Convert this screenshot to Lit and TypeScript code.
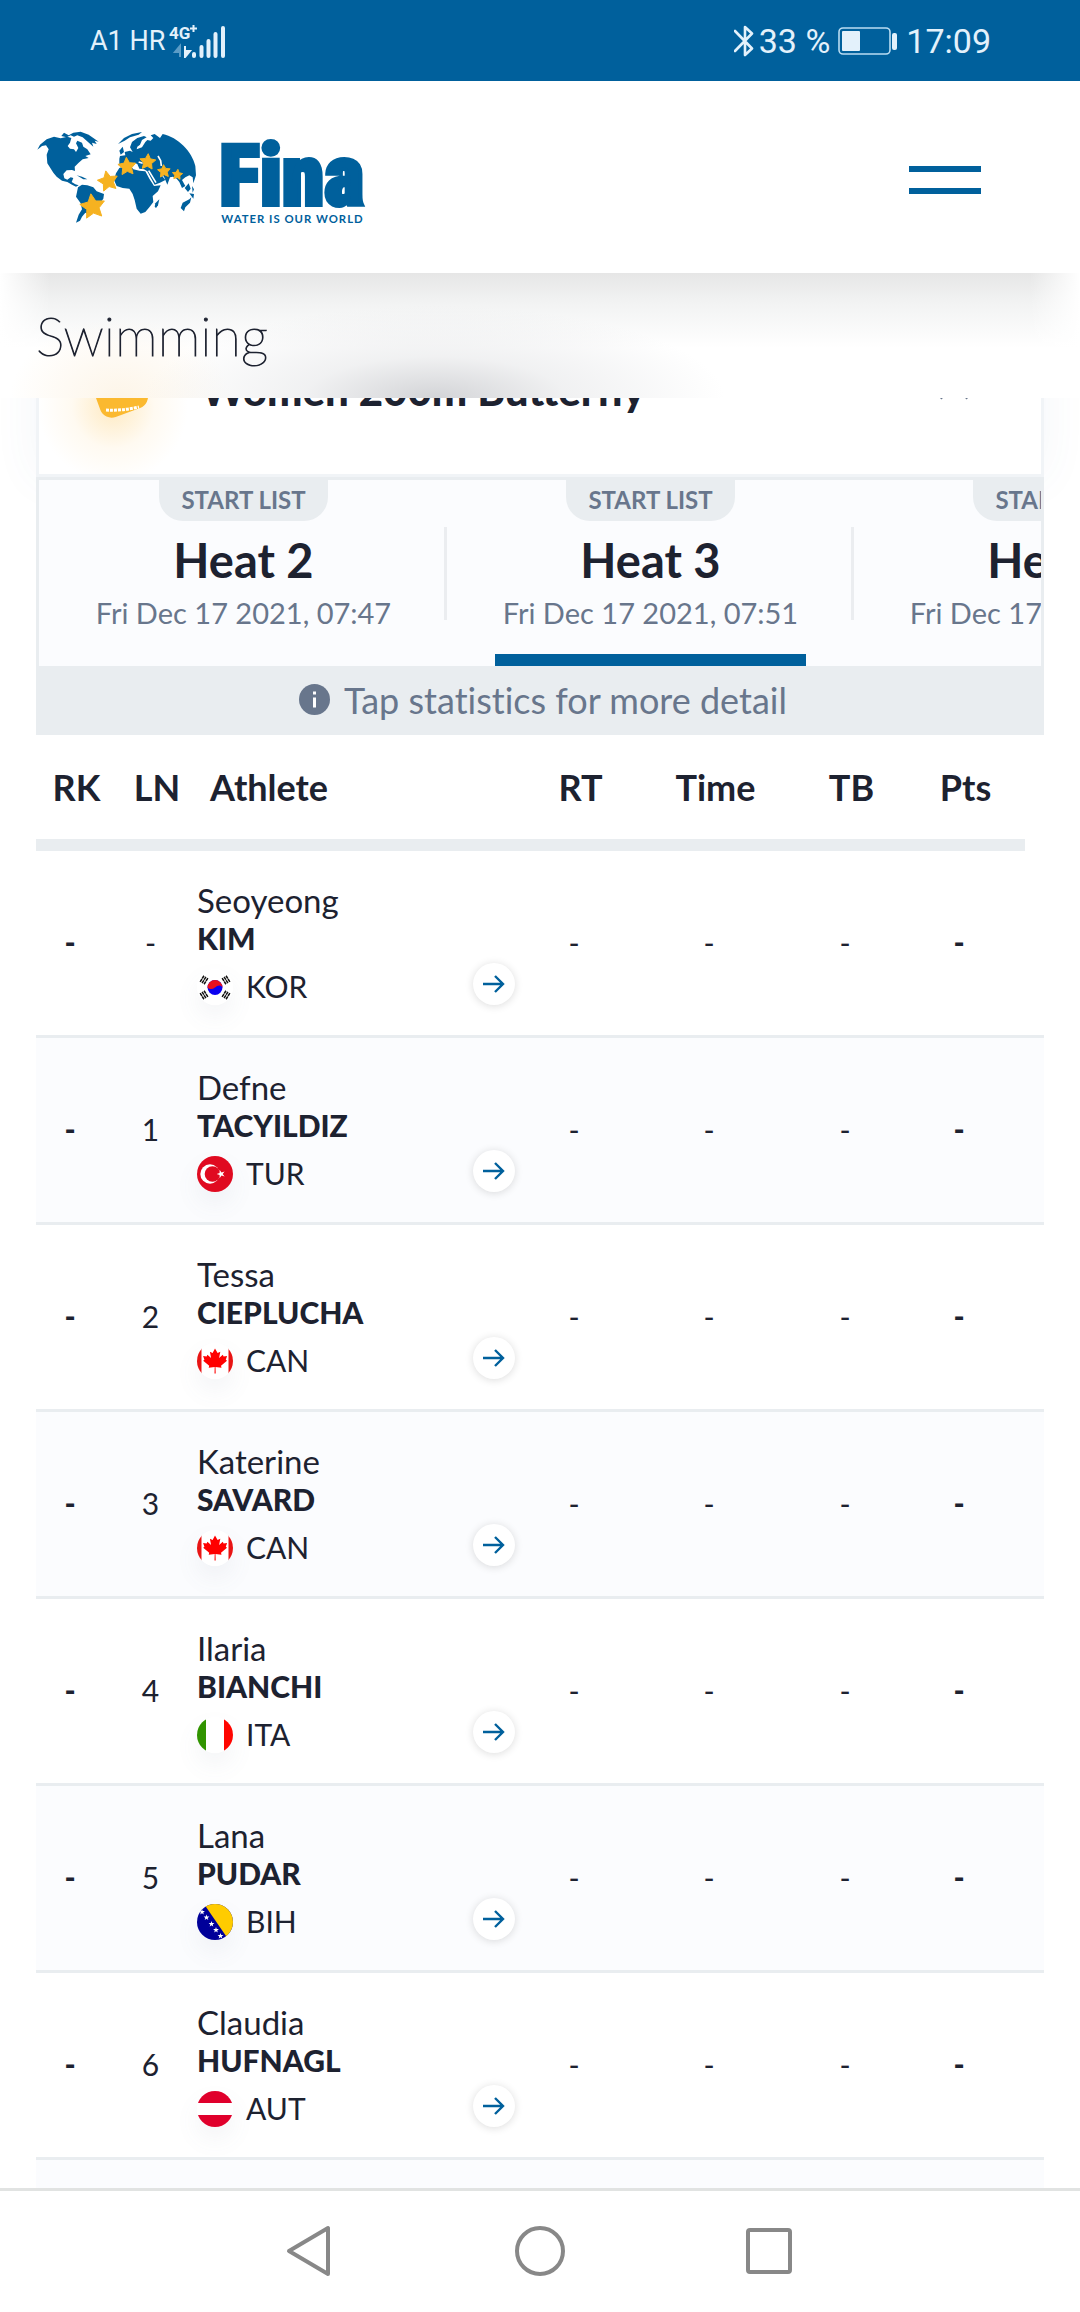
import { LitElement, html, css, svg, nothing } from "lit";
import { customElement, property, state } from "lit/decorators.js";
import { classMap } from "lit/directives/class-map.js";

type Athlete = { lane: string; first: string; last: string; country: string };

const HEATS = [
  { id: 2, name: "Heat 2", date: "Fri Dec 17 2021, 07:47" },
  { id: 3, name: "Heat 3", date: "Fri Dec 17 2021, 07:51" },
  { id: 4, name: "Heat 4", date: "Fri Dec 17 2021, 07:55" },
];

const ATHLETES: Athlete[] = [
  { lane: "-", first: "Seoyeong", last: "KIM", country: "KOR" },
  { lane: "1", first: "Defne", last: "TACYILDIZ", country: "TUR" },
  { lane: "2", first: "Tessa", last: "CIEPLUCHA", country: "CAN" },
  { lane: "3", first: "Katerine", last: "SAVARD", country: "CAN" },
  { lane: "4", first: "Ilaria", last: "BIANCHI", country: "ITA" },
  { lane: "5", first: "Lana", last: "PUDAR", country: "BIH" },
  { lane: "6", first: "Claudia", last: "HUFNAGL", country: "AUT" },
];

/** Points of a five-pointed star. */
function star(cx: number, cy: number, r: number, turn = 0, inner = 0.5): string {
  const pts: string[] = [];
  for (let i = 0; i < 10; i++) {
    const a = ((i * 36 - 90 + turn) * Math.PI) / 180;
    const d = i % 2 ? r * inner : r;
    pts.push(`${(cx + d * Math.cos(a)).toFixed(1)},${(cy + d * Math.sin(a)).toFixed(1)}`);
  }
  return pts.join(" ");
}

const trigram = (x: number, y: number, turn: number) => svg`
  <g transform="translate(${x} ${y}) rotate(${turn})" stroke="#111" stroke-width="1.5">
    <path d="M-3.6 -2.3H3.6M-3.6 0H3.6M-3.6 2.3H3.6"/>
    <path d="M0 -3.4V3.4" stroke="#fff" stroke-width=".6"/>
  </g>`;

const FLAGS: Record<string, unknown> = {
  KOR: svg`<rect width="36" height="36" fill="#fff"/>
    <circle cx="18" cy="18.500" r="7.500" fill="#0a00f0"/>
    <path d="M10.500 18.500a7.500 7.500 0 0 1 15 0c-2-3-5-2-7.500 0s-5.500 2-7.500 0z" fill="#e8101c"/>
    ${trigram(7, 11, -58)}${trigram(29, 11, 58)}${trigram(7, 26, 58)}${trigram(29, 26, -58)}`,
  TUR: svg`<rect width="36" height="36" fill="#e00a20"/>
    <circle cx="13" cy="18" r="9.700" fill="#fff"/><circle cx="15.500" cy="18" r="7.800" fill="#e00a20"/>
    <polygon points="${star(24, 18, 4.4, -18, 0.38)}" fill="#fff"/>`,
  CAN: svg`<rect width="36" height="36" fill="#fff"/>
    <path d="M0 0H4.500V36H0zM31.500 0H36V36H31.500z" fill="#e81414"/>
    <path d="M18 5.500l2.600 4.600 2.700-1.300-1.200 6.200 3.700-3.300.8 1.900 3.500-.5-1.300 3.600 1.200 1-6 5 .5 2.100-6-.8.200 6.500h-1.200l.2-6.500-6 .8.500-2.100-6-5 1.200-1-1.300-3.600 3.500.5.800-1.900 3.700 3.300-1.200-6.200 2.700 1.300z" fill="#f00"/>`,
  ITA: svg`<rect width="36" height="36" fill="#fff"/>
    <path d="M0 0H9V36H0z" fill="#319400"/><path d="M27 0H36V36H27z" fill="#ff0500"/>`,
  BIH: svg`<rect width="36" height="36" fill="#009"/>
    <path d="M7 0H36V36L29 32z" fill="#fc0"/>
    <g fill="#fff">${[[5, 8], [9.500, 13.500], [14.500, 20], [19, 26], [23.500, 32]].map(
      ([x, y]) => svg`<polygon points="${star(x, y, 3, 0, 0.42)}"/>`,
    )}</g>`,
  AUT: svg`<rect width="36" height="36" fill="#fff"/>
    <path d="M0 0H36V12H0zM0 24H36V36H0z" fill="#e0002c"/>`,
};

@customElement("country-flag")
export class CountryFlag extends LitElement {
  @property() code = "";

  static styles = css`
    :host {
      display: block;
      flex: none;
      width: 36px;
      height: 36px;
      border-radius: 50%;
      overflow: hidden;
      box-shadow: 0 12px 24px rgba(104, 118, 140, 0.08);
    }
    svg {
      display: block;
      width: 100%;
      height: 100%;
    }
  `;

  render() {
    return html`<svg viewBox="0 0 36 36" aria-hidden="true">${FLAGS[this.code] ?? nothing}</svg>`;
  }
}

@customElement("status-bar")
export class StatusBar extends LitElement {
  static styles = css`
    :host {
      display: flex;
      align-items: center;
      justify-content: space-between;
      height: 81px;
      padding: 0 89px 0 90px;
      background: #00609c;
      color: #e3f1fb;
      font-family: Roboto, "Liberation Sans", sans-serif;
    }
    .group {
      display: flex;
      align-items: center;
    }
    .carrier {
      font-size: 27px;
      margin-right: 4px;
    }
    .value {
      font-size: 34px;
    }
    .signal {
      width: 58px;
      height: 34px;
    }
    .bluetooth {
      width: 20px;
      height: 34px;
      margin-right: 5px;
    }
    .battery {
      width: 60px;
      height: 30px;
      margin: 0 8px;
    }
  `;

  render() {
    return html`
      <div class="group">
        <span class="carrier">A1 HR</span>
        <svg class="signal" viewBox="0 0 58 34" aria-hidden="true">
          <text x="0" y="15" font-size="17" font-weight="700" fill="#e3f1fb">4G</text>
          <path d="M21 4.500h7M24.500 1v7" stroke="#e3f1fb" stroke-width="2" />
          <path d="M11 22v11M11 22l-5 6h5z" stroke="#5b9cc6" fill="#5b9cc6" stroke-width="2" />
          <path d="M16 22v11M16 33l5-6h-5z" stroke="#e3f1fb" fill="#e3f1fb" stroke-width="2" />
          <path
            d="M25 30v2M32.500 23v9M39.500 17v15M46.500 10v22M54 4v28"
            stroke="#e3f1fb"
            stroke-width="4"
            stroke-linecap="round"
          />
        </svg>
      </div>
      <div class="group">
        <svg class="bluetooth" viewBox="0 0 20 34" aria-hidden="true">
          <path
            d="M1 7L18 24.500L11 31V3L18 9.500L1 27"
            fill="none"
            stroke="#e3f1fb"
            stroke-width="2.600"
            stroke-linejoin="round"
            stroke-linecap="round"
          />
        </svg>
        <span class="value">33 %</span>
        <svg class="battery" viewBox="0 0 60 30" aria-hidden="true">
          <rect x="1" y="2" width="51" height="26" rx="4" fill="none" stroke="#b9dcf2" stroke-width="1.600" />
          <rect x="4" y="5" width="18" height="20" rx="1" fill="#e3f1fb" />
          <rect x="54" y="7" width="5" height="17" rx="2" fill="#e3f1fb" />
        </svg>
        <span class="value">17:09</span>
      </div>
    `;
  }
}

@customElement("site-header")
export class SiteHeader extends LitElement {
  static styles = css`
    :host {
      display: flex;
      align-items: center;
      justify-content: space-between;
      height: 192px;
      padding: 0 87px 0 30px;
      background: #fff;
      box-sizing: border-box;
    }
    .logo {
      display: block;
    }
    .logo svg {
      display: block;
      width: 350px;
      height: 115px;
    }
    .word {
      font: 900 255px "Roboto Condensed", Lato, sans-serif;
    }
    .tag {
      font: 700 34px Lato, sans-serif;
      letter-spacing: 3px;
    }
    .menu {
      display: flex;
      flex-direction: column;
      gap: 16px;
      margin-top: 6px;
      padding: 12px;
      border: 0;
      background: none;
    }
    .bar {
      width: 72px;
      height: 6px;
      background: #00609c;
    }
  `;

  render() {
    return html`
      <a class="logo" href="#" aria-label="Fina">
        <svg viewBox="0 0 1050 345">
          <g fill="#00609c">
            <path
              d="M22 89L30 74L50 58L72 50L92 55L112 50L124 54L120 68L113 78L120 86L132 88L138 96L145 84L138 70L142 62L156 68L160 80L172 88L182 103L166 108L176 114L158 118L146 128L134 140L135 153L126 150L110 151L100 162L103 175L112 179L122 172L130 174L125 186L136 193L146 196L138 200L126 194L112 186L96 182L80 170L70 158L52 130L50 104L56 88L48 76L36 78Z"
            />
            <path d="M94 48L102 38L116 46L130 38L152 35L176 44L190 54L206 65L194 62L200 72L186 68L190 80L174 66L158 52L142 46L132 50L122 46L110 52Z" />
            <path d="M140 166L156 170L172 178L160 178Z" />
            <path
              d="M144 202L156 194L172 196L190 202L200 214L222 222L220 236L208 252L196 272L178 284L166 278L156 290L150 302L138 308L146 284L156 268L152 250L138 230Z"
            />
            <path d="M264 72L282 54L306 42L336 36L326 44L300 52L284 62Z" />
            <path d="M268 92L278 80L282 96L272 104Z" />
            <path
              d="M268 116L270 108L286 106L284 96L300 92L308 96L300 82L306 66L322 54L342 48L350 52L336 60L330 74L322 80L320 88L336 82L346 66L352 60L362 62L370 54L362 46L374 42L390 54L398 42C444 52 486 94 496 138L498 166L490 190L488 172L478 166L466 172L456 180L466 198L456 204L448 186L440 176L428 170L420 172L412 194L402 170L392 162L406 180L390 188L374 194L364 176L352 154L342 148L328 146L322 132L312 128L306 140L290 118L282 132L268 136Z"
            />
            <path
              d="M268 144L290 136L304 140L310 148L328 152L346 154L358 176L372 198L392 196L384 214L368 228L370 246L358 262L346 276L332 281L320 266L314 240L308 222L298 206L278 204L260 198L252 180L258 160Z"
            />
            <path d="M374 260L376 250L388 238L384 256L378 264Z" />
            <path d="M452 264L458 248L478 238L484 232L480 248L466 262L462 274Z" />
            <path d="M464 204L476 190L482 206L474 216ZM486 198L492 208L488 218ZM478 220L492 222L490 236L484 228Z" />
          </g>
          <path d="M384 108L392 122L394 138M326 126L338 130M356 152L378 188" stroke="#fff" stroke-width="5" fill="none" />
          <g fill="#f6b221" stroke="#f6b221" stroke-width="3" stroke-linejoin="round">
            <polygon points="${star(188, 260, 39, -8)}" />
            <polygon points="${star(234, 184, 32, -12)}" />
            <polygon points="${star(291, 140, 28, -4)}" />
            <polygon points="${star(353, 126, 25, 4)}" />
            <polygon points="${star(402, 154, 20, -4)}" />
            <polygon points="${star(442, 164, 16, 6)}" />
          </g>
          <text class="word" x="568" y="256" fill="#00609c" stroke="#00609c" stroke-width="12">Fina</text>
          <text class="tag" x="574" y="309" fill="#00609c">WATER IS OUR WORLD</text>
        </svg>
      </a>
      <button class="menu" type="button" aria-label="Menu">
        <span class="bar"></span>
        <span class="bar"></span>
      </button>
    `;
  }
}

@customElement("heat-tabs")
export class HeatTabs extends LitElement {
  @state() private active = 3;

  static styles = css`
    :host {
      display: flex;
      overflow: hidden;
      padding-left: 1px;
      background: #fbfcfe;
      border: 3px solid #e9edf0;
      border-bottom: 0;
    }
    .heat {
      display: flex;
      flex-direction: column;
      align-items: center;
      flex: none;
      width: 407px;
      height: 186px;
      padding: 0;
      border: 0;
      background: linear-gradient(#ebedf0, #ebedf0) right top 47px / 3px 93px no-repeat;
      color: #68768c;
      font-family: Lato, sans-serif;
    }
    .badge {
      padding: 0 22px 2px;
      border-radius: 0 0 24px 24px;
      background: #e9edf0;
      font-size: 24px;
      font-weight: 700;
      line-height: 39px;
    }
    .name {
      margin-top: 12px;
      color: #1d2230;
      font-size: 47px;
      font-weight: 700;
      line-height: 54px;
    }
    .date {
      font-size: 29px;
      line-height: 52px;
    }
    .mark {
      width: 311px;
      height: 12px;
      margin-top: auto;
    }
    .active .mark {
      background: #00609c;
    }
  `;

  render() {
    return HEATS.map(
      (h) => html`
        <button
          type="button"
          class=${classMap({ heat: true, active: h.id === this.active })}
          @click=${() => (this.active = h.id)}
        >
          <span class="badge">START LIST</span>
          <span class="name">${h.name}</span>
          <span class="date">${h.date}</span>
          <span class="mark"></span>
        </button>
      `,
    );
  }
}

@customElement("start-list")
export class StartList extends LitElement {
  static styles = css`
    :host {
      display: block;
    }
    table {
      width: 100%;
      table-layout: fixed;
      border-collapse: separate;
      border-spacing: 0;
    }
    .rk {
      width: 68px;
    }
    .ln {
      width: 93px;
    }
    .rt {
      width: 118px;
    }
    .time {
      width: 152px;
    }
    .tb,
    .pts {
      width: 120px;
    }
    .edge {
      width: 19px;
    }
    th,
    td {
      padding: 0;
      text-align: center;
      font-size: 30px;
      box-sizing: border-box;
    }
    th {
      height: 116px;
      padding: 0 0 0 13px;
      border-bottom: 12px solid #e9edf0;
      font-size: 36px;
      font-weight: 700;
      line-height: 44px;
    }
    th.name {
      text-align: left;
    }
    td.end,
    th.end {
      padding-right: 12px;
    }
    th.blank {
      border: 0;
    }
    td {
      padding-bottom: 2px;
      border-bottom: 3px solid #e9edf0;
    }
    tr:nth-child(even) td {
      background: #fbfcfe;
    }
    .strong {
      font-weight: 900;
    }
    .cell {
      display: flex;
      align-items: flex-end;
      justify-content: space-between;
      padding: 30px 0 28px;
      text-align: left;
    }
    .first,
    .last {
      display: block;
      line-height: 38px;
    }
    .first {
      font-size: 33px;
    }
    .last {
      font-size: 30px;
      font-weight: 900;
    }
    .nation {
      display: flex;
      gap: 13px;
      height: 36px;
      margin-top: 12px;
      line-height: 34px;
    }
    .go {
      display: flex;
      align-items: center;
      justify-content: center;
      width: 42px;
      height: 42px;
      border-radius: 50%;
      background: #fff;
      box-shadow: 0 1px 9px rgba(0, 0, 0, 0.14);
    }
    .spare td {
      height: 187px;
    }
  `;

  render() {
    return html`
      <table>
        <colgroup>
          <col class="rk" /><col class="ln" /><col /><col class="rt" /><col class="time" /><col class="tb" /><col
            class="pts"
          /><col class="edge" />
        </colgroup>
        <thead>
          <tr>
            <th>RK</th>
            <th>LN</th>
            <th class="name">Athlete</th>
            <th>RT</th>
            <th>Time</th>
            <th>TB</th>
            <th class="end">Pts</th>
            <th class="blank"></th>
          </tr>
        </thead>
        <tbody>
          ${ATHLETES.map(
            (a) => html`
              <tr>
                <td class="strong">-</td>
                <td>${a.lane}</td>
                <td>
                  <div class="cell">
                    <div>
                      <span class="first">${a.first}</span>
                      <span class="last">${a.last}</span>
                      <div class="nation"><country-flag code=${a.country}></country-flag>${a.country}</div>
                    </div>
                    <a class="go" href="#" aria-label="${a.first} ${a.last}">
                      <svg width="24" height="20" viewBox="0 0 24 20" fill="none" stroke="#00609c" stroke-width="2.400">
                        <path d="M1 10H21M13 2L21 10L13 18" />
                      </svg>
                    </a>
                  </div>
                </td>
                <td>-</td>
                <td>-</td>
                <td>-</td>
                <td class="strong end">-</td>
                <td></td>
              </tr>
            `,
          )}
          <tr class="spare">
            <td colspan="8"></td>
          </tr>
        </tbody>
      </table>
    `;
  }
}

@customElement("app-root")
export class AppRoot extends LitElement {
  static styles = css`
    :host {
      display: flex;
      flex-direction: column;
      height: 100vh;
      overflow: hidden;
      background: #fff;
      color: #1d2230;
      font-family: Lato, sans-serif;
    }
    status-bar,
    site-header,
    .system {
      flex: none;
    }
    main {
      flex: 1;
      min-height: 0;
      overflow: hidden;
    }
    .title {
      position: relative;
      z-index: 1;
      height: 125px;
      padding: 0 36px;
      background:
        radial-gradient(ellipse 290px 92px at 435px 100%, #d3d4d7, rgba(226, 227, 229, 0.5) 45%, transparent),
        radial-gradient(ellipse 110px 80px at 120px 100%, #fdf5e8, transparent),
        linear-gradient(90deg, #fff, transparent 50px calc(100% - 50px), #fff),
        linear-gradient(#e6e6e6, #f2f3f3 30px, #fff 75px) #fff;
    }
    h1 {
      margin: 0;
      font-size: 54px;
      font-weight: 200;
      line-height: 126px;
      -webkit-text-stroke: 1px #1d2230;
    }
    .card {
      margin: 0 36px;
    }
    .event {
      display: flex;
      align-items: center;
      margin-top: -93px;
      height: 169px;
      padding: 0 70px 0 42px;
      background: radial-gradient(circle 75px at 74px 102px, #feeac2, #fffaf1 55%, transparent) #fff;
      border: solid #f1f4f7;
      border-width: 0 3px 3px;
      box-shadow: 0 0 45px rgba(60, 110, 160, 0.06);
    }
    .ticket {
      flex: none;
      width: 72px;
      height: 72px;
    }
    h2 {
      flex: 1;
      margin: 0 0 0 48px;
      font-size: 42px;
      font-weight: 900;
      line-height: 54px;
    }
    .collapse {
      display: flex;
      padding: 0;
      border: 0;
      background: none;
    }
    .hint {
      display: flex;
      align-items: center;
      justify-content: center;
      gap: 14px;
      box-sizing: border-box;
      height: 69px;
      margin: 0;
      padding: 0 0 2px 6px;
      background: #e9edf0;
      color: #68768c;
      font-size: 36px;
      font-variant-ligatures: none;
    }
    .system {
      display: flex;
      align-items: center;
      justify-content: center;
      gap: 178px;
      box-sizing: border-box;
      height: 124px;
      padding-bottom: 2px;
      border-top: 3px solid #e1e3e2;
      background: #fff;
    }
    .key {
      display: flex;
      padding: 0;
      border: 0;
      background: none;
    }
  `;

  render() {
    return html`
      <status-bar></status-bar>
      <site-header></site-header>
      <main>
        <div class="title"><h1>Swimming</h1></div>
        <section class="card">
          <div class="event">
            <svg class="ticket" viewBox="0 0 72 72" aria-hidden="true">
              <rect x="13" y="4" width="50" height="56" rx="12" transform="rotate(-20 38 34)" fill="#fbb92f" />
              <path d="M25 56Q41 57 58 53" fill="none" stroke="#fff" stroke-width="3" stroke-dasharray="3 1" />
            </svg>
            <h2>Women 200m Butterfly</h2>
            <button class="collapse" type="button" aria-label="Collapse event">
              <svg width="34" height="20" viewBox="0 0 34 20" fill="none" stroke="#68768c" stroke-width="4">
                <path d="M3 18L17 4L31 18" />
              </svg>
            </button>
          </div>
          <heat-tabs></heat-tabs>
          <p class="hint">
            <svg width="31" height="31" viewBox="0 0 31 31" aria-hidden="true">
              <circle cx="15.500" cy="15.500" r="15.500" fill="#68768c" />
              <path d="M15.500 7.500v3M15.500 13.500v10" stroke="#fff" stroke-width="3" />
            </svg>
            Tap statistics for more detail
          </p>
          <start-list></start-list>
        </section>
      </main>
      <nav class="system" aria-label="System">
        <button class="key" type="button" aria-label="Back">
          <svg width="52" height="52" viewBox="0 0 52 52" fill="none" stroke="#888" stroke-width="4" stroke-linejoin="round">
            <path d="M44 3V49L5 26Z" />
          </svg>
        </button>
        <button class="key" type="button" aria-label="Home">
          <svg width="52" height="52" viewBox="0 0 52 52" fill="none" stroke="#888" stroke-width="4">
            <circle cx="26" cy="26" r="23" />
          </svg>
        </button>
        <button class="key" type="button" aria-label="Recent apps">
          <svg width="52" height="52" viewBox="0 0 52 52" fill="none" stroke="#888" stroke-width="4">
            <rect x="4" y="5" width="42" height="42" rx="2" />
          </svg>
        </button>
      </nav>
    `;
  }
}
